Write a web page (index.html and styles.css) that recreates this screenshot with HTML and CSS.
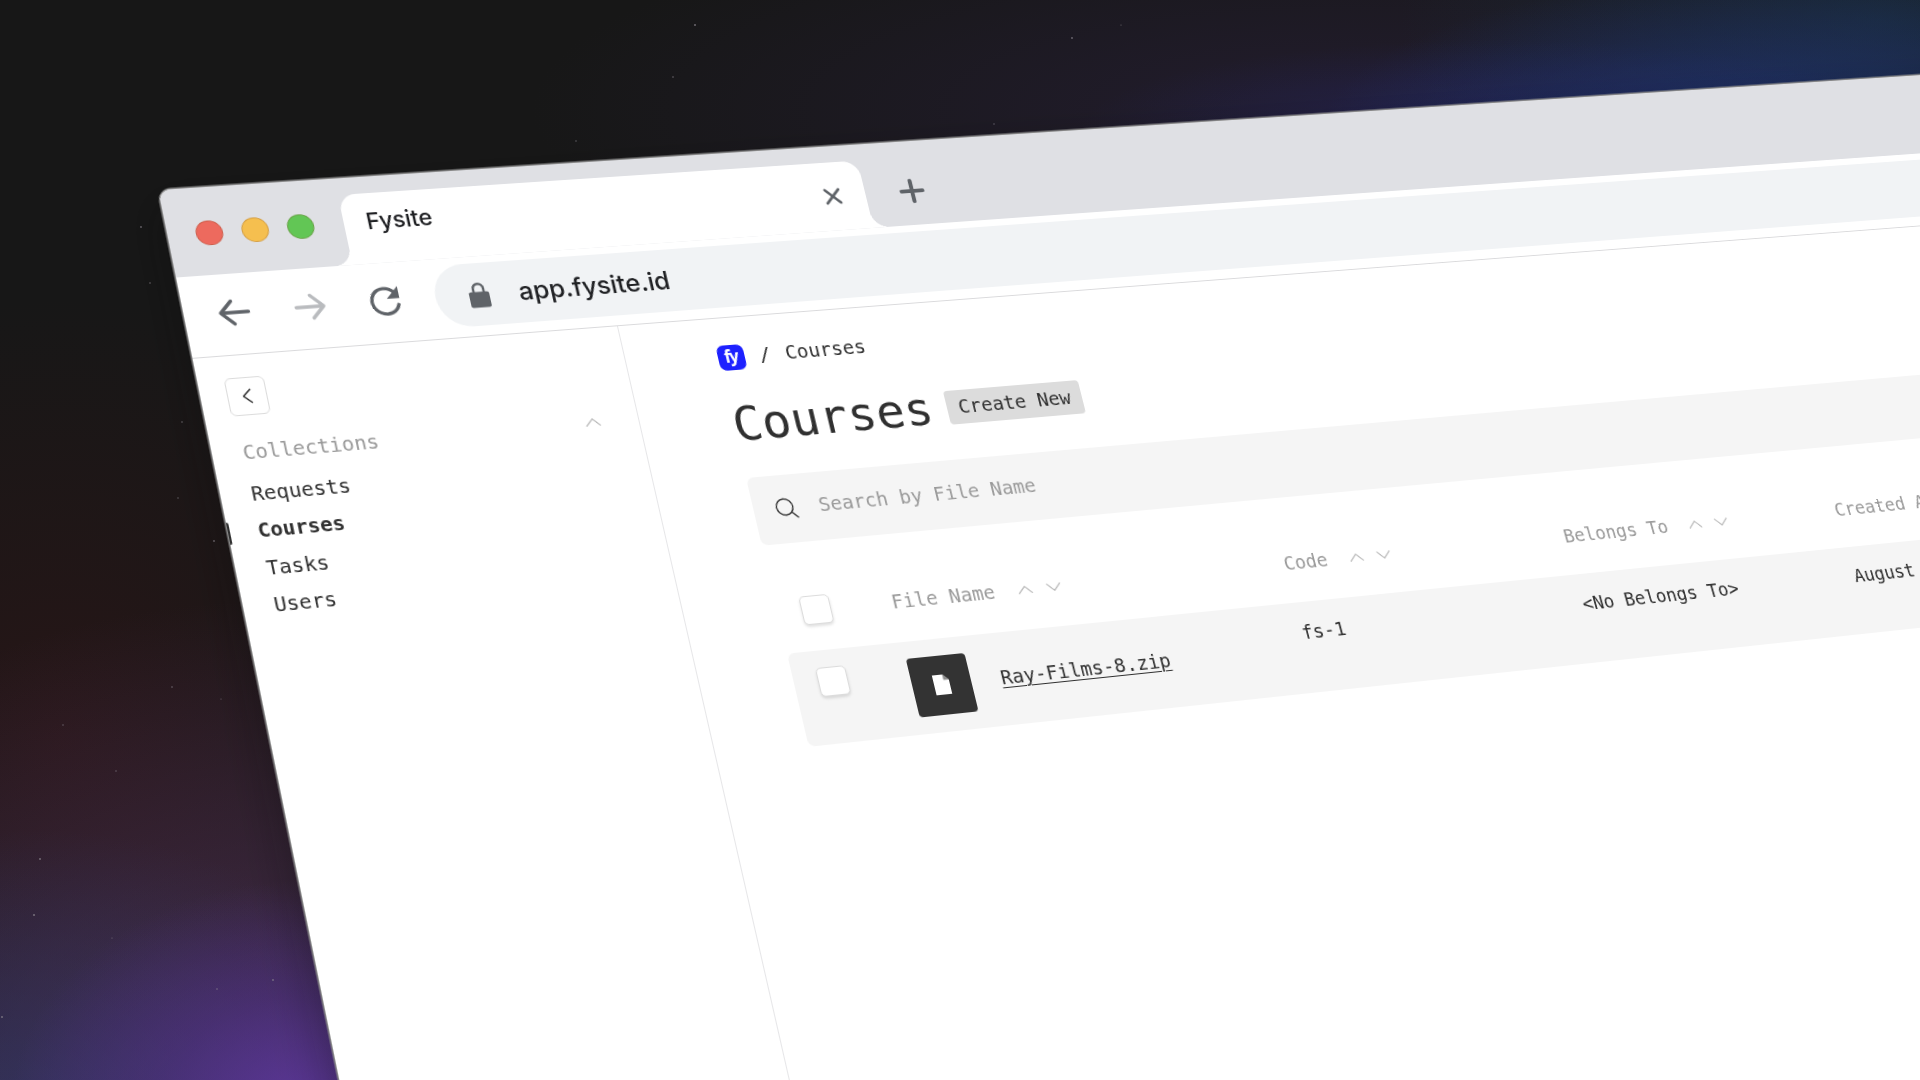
FILE: index.html
```html
<!DOCTYPE html>
<html lang="en">
<head>
<meta charset="utf-8">
<title>Fysite</title>
<link rel="stylesheet" href="styles.css">
</head>
<body>
<svg class="defs" width="0" height="0" aria-hidden="true">
  <symbol id="up" viewBox="0 0 16 10"><path d="M1.3 8.3 8 1.6l6.7 6.7"/></symbol>
  <symbol id="down" viewBox="0 0 16 10"><path d="M1.3 1.6 8 8.3l6.7-6.7"/></symbol>
</svg>
<div class="stage">
  <svg class="stars" viewBox="0 0 1920 1080" aria-hidden="true">
    <circle cx="695" cy="25" r="1"/><circle cx="1072" cy="38" r=".9"/><circle cx="673" cy="77" r=".8"/>
    <circle cx="1121" cy="25" r=".6"/><circle cx="994" cy="124" r=".7"/><circle cx="576" cy="141" r=".7"/>
    <circle cx="141" cy="227" r=".9"/><circle cx="150" cy="283" r=".8"/><circle cx="182" cy="422" r=".8"/>
    <circle cx="214" cy="541" r=".9"/><circle cx="178" cy="498" r=".7"/><circle cx="172" cy="687" r=".8"/>
    <circle cx="63" cy="725" r=".7"/><circle cx="221" cy="699" r=".6"/><circle cx="116" cy="771" r=".7"/>
    <circle cx="40" cy="859" r="1"/><circle cx="34" cy="915" r="1.1"/><circle cx="112" cy="938" r=".6"/>
    <circle cx="273" cy="980" r=".9"/><circle cx="217" cy="989" r=".8"/><circle cx="2" cy="1017" r="1"/>
  </svg>

  <div class="browser">
    <div class="strip">
      <div class="lights"><i class="red"></i><i class="yellow"></i><i class="green"></i></div>
      <div class="tab">
        <span>Fysite</span>
        <svg class="close" viewBox="0 0 20 20"><path d="M3 3l14 14M17 3 3 17"/></svg>
      </div>
      <svg class="plus" viewBox="0 0 28 28"><path d="M14 3v22M3 14h22"/></svg>
    </div>

    <div class="toolbar">
      <svg class="nav" viewBox="0 0 32 32"><path d="M29.5 16H3M14.5 4.5 3 16l11.500 11.500"/></svg>
      <svg class="nav off" viewBox="0 0 32 32"><path d="M2.500 16H29M17.500 4.500 29 16 17.500 27.500"/></svg>
      <svg class="nav" viewBox="0 0 32 32"><path d="M25.800 7.500A13 13 0 1 0 28.300 20.200"/><path class="solid" d="M30 1.500v12.200H17.800z"/></svg>
      <div class="address">
        <svg class="lock" viewBox="0 0 22 28"><path class="shackle" d="M6 12V7.200a5 5 0 0 1 10 0V12"/><rect x="1" y="10.500" width="20" height="16" rx="2"/></svg>
        <span>app.fysite.id</span>
      </div>
    </div>

    <div class="page">
      <aside class="sidebar">
        <button class="collapse" aria-label="Collapse"><svg viewBox="0 0 10 16"><path d="M8.500 1.500 1.500 8l7 6.500"/></svg></button>
        <div class="group"><span>Collections</span><svg class="chev"><use href="#up"/></svg></div>
        <ul>
          <li>Requests</li>
          <li class="active">Courses</li>
          <li>Tasks</li>
          <li>Users</li>
        </ul>
      </aside>

      <main class="main">
        <div class="crumbs"><span class="logo">fy</span><span>/</span><span>Courses</span></div>
        <div class="heading"><h1>Courses</h1><button class="create">Create New</button></div>
        <div class="search">
          <svg viewBox="0 0 24 24"><circle cx="10.500" cy="10.500" r="8.200"/><path d="M16.600 16.300 22 21.800"/></svg>
          <span>Search by File Name</span>
        </div>
        <div class="row head">
          <div><i class="check"></i></div>
          <div class="col">File Name<svg class="chev"><use href="#up"/></svg><svg class="chev"><use href="#down"/></svg></div>
          <div class="col">Code<svg class="chev"><use href="#up"/></svg><svg class="chev"><use href="#down"/></svg></div>
          <div class="col">Belongs To<svg class="chev"><use href="#up"/></svg><svg class="chev"><use href="#down"/></svg></div>
          <div class="col">Created At</div>
        </div>
        <div class="row item">
          <div><i class="check"></i></div>
          <div class="file">
            <span class="thumb"><svg viewBox="0 0 16 20"><path d="M0 0h10.500L16 5.500V20H0z"/><path class="fold" d="M10.500 0v5.500H16z"/></svg></span>
            <a>Ray-Films-8.zip</a>
          </div>
          <div class="cell">fs-1</div>
          <div class="cell">&lt;No Belongs To&gt;</div>
          <div class="cell">August 20</div>
        </div>
      </main>
    </div>
  </div>
</div>
</body>
</html>
```
FILE: styles.css
```css
* { box-sizing: border-box; }

body { margin: 0; background: #171717; }

.defs { display: block; }

.stage {
  position: relative;
  width: 1920px;
  height: 1080px;
  overflow: hidden;
  background:
    radial-gradient(ellipse 300px 230px at 310px 1110px, rgba(100, 56, 175, .75), rgba(88, 48, 155, .42) 50%, transparent),
    radial-gradient(ellipse 400px 300px at 40px 1130px, rgba(52, 66, 132, .5), transparent),
    radial-gradient(ellipse 640px 480px at 280px 1080px, rgba(92, 58, 108, .64), transparent),
    radial-gradient(ellipse 440px 440px at 60px 740px, rgba(58, 20, 22, .45), transparent),
    radial-gradient(ellipse 460px 160px at 1780px 135px, rgba(32, 55, 130, .75), transparent),
    radial-gradient(ellipse 420px 90px at 1500px 130px, rgba(34, 38, 105, .55), transparent),
    radial-gradient(ellipse 480px 240px at 1880px 20px, rgba(26, 54, 78, .55), transparent),
    radial-gradient(ellipse 820px 210px at 1350px 110px, rgba(42, 32, 62, .6), transparent),
    #171717;
}

.stars { position: absolute; inset: 0; fill: #8f8a92; opacity: .7; }

/* The window is drawn flat and then laid into perspective. */
.browser {
  position: absolute;
  left: 0;
  top: 0;
  width: 2150px;
  height: 1150px;
  overflow: hidden;
  display: flex;
  flex-direction: column;
  border-radius: 12px 0 0 0;
  background: #fff;
  box-shadow: 0 0 0 1.500px #8a8a8a, -6px 14px 45px rgba(10, 10, 10, .32);
  transform-origin: 0 0;
  transform: matrix3d(1.0584, -.05502, 0, .00007, .18995, .96662, 0, -.000056, 0, 0, 1, 0, 158.3, 190.100, 0, 1);
  font-family: "DejaVu Sans Mono", monospace;
  font-size: 19.600px;
  color: #303030;
}

svg { fill: none; stroke-linecap: round; stroke-linejoin: round; flex: none; }

/* Tab strip */
.strip { height: 89px; flex: none; display: flex; align-items: flex-end; padding-left: 27px; background: #dfe0e4; }
.lights { display: flex; gap: 18.500px; align-self: center; padding-top: 4px; width: 142.500px; }
.lights i { width: 25.500px; height: 25.500px; border: 1px solid rgba(120, 60, 20, .25); border-radius: 50%; background-clip: border-box; }
.lights .red { background-color: #ed6a5e; }
.lights .yellow { background-color: #f5bf4f; }
.lights .green { background-color: #62c655; }

.tab {
  position: relative;
  width: 526.500px;
  height: 72.400px;
  display: flex;
  justify-content: space-between;
  padding: 0 24.500px 0 22.500px;
  border-radius: 17px 17px 0 0;
  background: #fff;
  font: 500 22.800px/57px Inter, sans-serif;
  color: #202124;
}
.tab::before, .tab::after { content: ""; position: absolute; bottom: 0; width: 17px; height: 17px; }
.tab::before { right: 100%; background: radial-gradient(circle at 0 0, transparent 16.700px, #fff 17.200px); }
.tab::after { left: 100%; background: radial-gradient(circle at 100% 0, transparent 16.700px, #fff 17.200px); }
.close { width: 20px; height: 20px; margin-top: 26px; stroke: #5f6368; stroke-width: 2.800; }
.plus { width: 28px; height: 28px; margin: 0 0 22px 34.500px; stroke: #5f6368; stroke-width: 4.200; }

/* Toolbar */
.toolbar { height: 81.500px; flex: none; display: flex; padding: 7px 0 0 32px; border-bottom: 1.400px solid #dadadc; }
.nav { width: 32px; height: 32px; margin: 16px 41px 0 0; stroke: #5f6368; stroke-width: 3.300; }
.nav:nth-child(3) { margin-right: 33px; }
.nav.off { stroke: #b9bbbe; }
.solid { fill: #5f6368; stroke: none; }
.address { flex: 1; height: 64.300px; display: flex; padding: 0 0 0 32px; border-radius: 32px 0 0 32px; background: #f1f3f5; font: 500 25.500px/63px Inter, sans-serif; color: #202124; }
.lock { width: 22px; height: 28px; margin: 18.500px 28px 0 0; fill: #5f6368; }
.shackle { fill: none; stroke: #5f6368; stroke-width: 2.400; }

/* Page */
.page { flex: 1; display: flex; min-height: 0; }
.chev { width: 16px; height: 10px; stroke: currentColor; stroke-width: 1.200; opacity: .75; }

.sidebar { width: 415.400px; padding: 22px 0 0; border-right: 1.300px solid #e6e6e8; }
.collapse { display: flex; align-items: center; justify-content: center; width: 38.600px; height: 38.500px; margin-left: 24.500px; padding: 0; border: 1.300px solid #dcdcdc; border-radius: 6px; background: #fff; }
.collapse svg { width: 10px; height: 16px; stroke: #303030; stroke-width: 1.500; }
.group { display: flex; align-items: center; justify-content: space-between; margin-top: 19px; padding: 0 37px 0 29px; line-height: 36.600px; color: #999; }
.group .chev { margin-bottom: 4px; }
ul { list-style: none; margin: 4px 0 0; padding: 0; }
li { padding-left: 29px; line-height: 36.600px; }
.active { display: flex; align-items: center; padding-left: 0; font-weight: 700; }
.active::before { content: ""; width: 3px; height: 22px; margin: 0 26px 0 -1px; border-radius: 0 2px 2px 0; background: #303030; }

.main { flex: 1; padding: 28px 0 0 92px; }
.crumbs { display: flex; height: 26px; line-height: 26px; }
.crumbs span + span { margin-left: 15px; }
.crumbs .logo { width: 26.400px; height: 26px; border-radius: 7px; background: #1d21ff; color: #fff; text-align: center; font: 700 17px/23px "Open Sans", sans-serif; letter-spacing: -1.500px; text-indent: -1px; }
.heading { display: flex; margin-top: 32px; height: 50px; }
h1 { margin: 0 15px 0 -1px; font-size: 48.500px; font-weight: 400; line-height: 46px; }
.create { width: 142.500px; height: 35.300px; margin-top: 7.500px; padding: 0; border: 0; border-radius: 4px; background: #dcdcdc; color: #303030; font: 19.600px/34px "DejaVu Sans Mono", monospace; }
.search { display: flex; align-items: center; height: 69.500px; margin-top: 28px; padding-left: 21px; border-radius: 7px; background: #f5f5f5; color: #9a9a9a; }
.search svg { width: 24px; height: 24px; margin-right: 20.500px; stroke: #303030; stroke-width: 1.400; }
.search span { margin-top: -1px; }

.row { display: grid; grid-template-columns: 115px 412px 308.500px 311px 1fr; }
.check { display: block; width: 30px; height: 29px; margin-left: 24px; border: 1.300px solid #dcdcdc; border-radius: 5px; background: #fff; box-shadow: 0 2px 3px rgba(0, 0, 0, .12); }
.head { margin-top: 54px; height: 54.500px; color: #9a9a9a; }
.col { display: flex; line-height: 30px; }
.col .chev { margin: 10px 14px 0 0; }
.col .chev:first-of-type { margin-left: 23px; }
.item { height: 93.700px; border-radius: 7px; background: #f5f5f5; }
.item .check { margin-top: 17.500px; }
.file { display: flex; padding: 17.500px 0 0 1px; line-height: 58px; }
.thumb { display: flex; align-items: center; justify-content: center; width: 60px; height: 58.500px; margin-right: 30px; border-radius: 4px; background: #333; }
.thumb svg { width: 16px; height: 20px; fill: #fff; }
.thumb .fold { fill: #8c8c8c; }
.file a { text-decoration: underline; text-decoration-thickness: 1.400px; text-underline-offset: 3px; }
.cell { line-height: 30px; padding-top: 17px; }
```
